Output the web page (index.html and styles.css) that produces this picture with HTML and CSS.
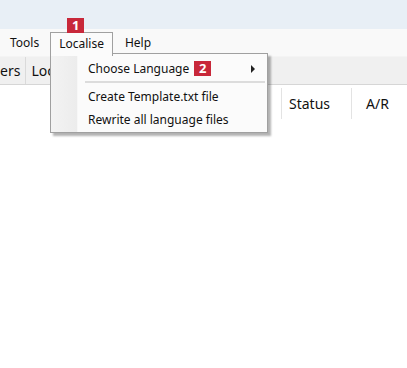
FILE: index.html
```html
<!DOCTYPE html>
<html lang="en">
<head>
    <meta charset="UTF-8">
    <title>Localise menu</title>
    <link rel="stylesheet" href="styles.css">
</head>
<body>

    <div class="titlebar"></div>

    <!-- Menu bar -->
    <div class="menubar">
        <span class="menu-item tools">Tools</span>
        <span class="menu-item active">Localise
            <span class="badge badge-one">1</span>
        </span>
        <span class="menu-item">Help</span>

        <!-- Open dropdown -->
        <div class="dropdown">
            <div class="gutter"></div>
            <div class="dropdown-items">
                <div class="dropdown-item">
                    <span>Choose Language</span>
                    <span class="badge badge-two">2</span>
                    <span class="arrow"></span>
                </div>
                <div class="separator"></div>
                <div class="dropdown-item">Create Template.txt file</div>
                <div class="dropdown-item">Rewrite all language files</div>
            </div>
        </div>
    </div>

    <!-- Tabs -->
    <div class="tabs">
        <span class="tab">ers</span>
        <span class="tab">Loc</span>
    </div>

    <!-- Table header -->
    <div class="table-header">
        <div class="col col-blank"></div>
        <div class="col col-status">Status</div>
        <div class="col col-ar">A/R</div>
    </div>

</body>
</html>
```

FILE: styles.css
```css
body {
    margin: 0;
    font-family: "Noto Sans", "Open Sans", sans-serif;
    font-size: 12px;
    color: #111;
    background-color: #fff;
    width: 407px;
    height: 368px;
    overflow: hidden;
}

.titlebar {
    height: 29px;
    background-color: #e8eff6;
}

.menubar {
    position: relative;
    height: 27px;
    display: flex;
    align-items: center;
    background-color: #f9f9f9;
}

.menu-item {
    position: relative;
    padding: 0 9px;
    line-height: 20px;
}

.menu-item.tools {
    margin-left: 1px;
    margin-right: 2px;
}

.menu-item.active {
    align-self: flex-end;
    height: 24px;
    line-height: 21px;
    padding: 0 8px;
    margin-right: 3px;
    box-sizing: border-box;
    border: 1px solid #a0a0a0;
    border-bottom: none;
    background-color: #fbfbfb;
    z-index: 2;
}

.badge {
    position: absolute;
    display: inline-block;
    width: 17px;
    height: 15px;
    line-height: 15px;
    text-align: center;
    background-color: #c8283a;
    color: #fff;
    font-weight: bold;
    font-size: 13px;
}

.badge-one {
    left: 16px;
    top: -15px;
}

.dropdown {
    position: absolute;
    left: 50px;
    top: 24px;
    width: 218px;
    height: 80px;
    display: flex;
    box-sizing: border-box;
    border: 1px solid #a0a0a0;
    background-color: #fbfbfb;
    box-shadow: 3px 3px 2px rgba(0, 0, 0, 0.3);
    z-index: 1;
}

.gutter {
    width: 26px;
    background: linear-gradient(to right, #f3f3f3, #ececec);
    border-right: 1px solid #f7f7f7;
}

.dropdown-items {
    flex: 1;
    padding-top: 3px;
}

.dropdown-item {
    position: relative;
    display: flex;
    align-items: center;
    height: 23px;
    padding-left: 10px;
}

.badge-two {
    position: static;
    margin-left: 5px;
}

.arrow {
    position: absolute;
    right: 12px;
    top: 8px;
    border-left: 4px solid #222;
    border-top: 4px solid transparent;
    border-bottom: 4px solid transparent;
}

.separator {
    height: 2px;
    margin: 1px 2px 2px 7px;
    background-color: #dcdcdc;
}

.tabs {
    height: 27px;
    display: flex;
    background-color: #f0f0f0;
    border-top: 1px solid #f4f4f4;
    border-bottom: 1px solid #d6d6d6;
}

.tab {
    line-height: 27px;
    font-size: 14px;
    padding: 0 5px 0 0;
    border-right: 1px solid #dadada;
}

.tab + .tab {
    padding-left: 5px;
}

.table-header {
    display: flex;
    height: 31px;
    margin-top: 3px;
}

.col {
    line-height: 31px;
    font-size: 14px;
}

.col-blank {
    width: 281px;
}

.col-status {
    width: 62px;
    padding-left: 7px;
    border-left: 1px solid #e3e3e3;
    border-right: 1px solid #e3e3e3;
}

.col-ar {
    padding-left: 14px;
}
```
